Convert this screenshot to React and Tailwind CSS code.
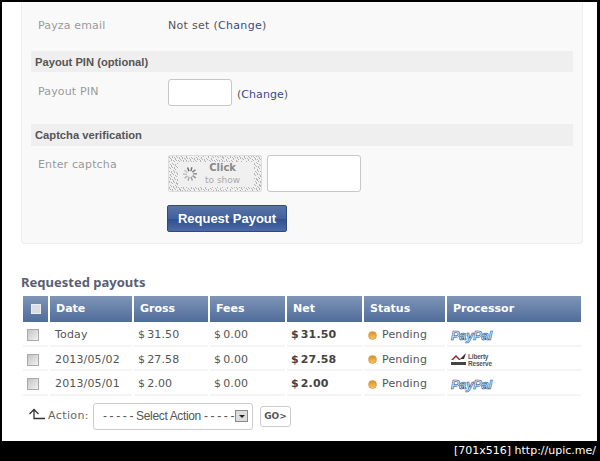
import React from 'react';

const COLS = 'grid grid-cols-[25px_82px_74px_75px_75px_81px_134px] gap-x-[2px]';
const CELL = 'border-b-2 border-[#f4f4f4] flex items-center pt-[4px]';

const ROWS = [
  { date: 'Today', gross: '31.50', net: '31.50', proc: 'paypal' },
  { date: '2013/05/02', gross: '27.58', net: '27.58', proc: 'liberty' },
  { date: '2013/05/01', gross: '2.00', net: '2.00', proc: 'paypal' },
];

// fixed speckle for the captcha frame
const SPECKS = Array.from({ length: 900 }, (_, i) => {
  const x = (i * 37) % 94;
  const y = (i * 23 + (i % 7) * 5) % 37;
  return { x, y, edge: x < 9 || x > 84 || y < 6 || y > 30 };
}).filter((s) => s.edge);

const Spinner = () => (
  <svg width="18" height="18" viewBox="0 0 18 18" className="shrink-0">
    {Array.from({ length: 10 }, (_, i) => (
      <line key={i} x1="9" y1="2" x2="9" y2="6" stroke="#666" strokeOpacity={1 - i * 0.08} strokeWidth="1.4" transform={`rotate(${i * 36 - 20} 9 9)`} />
    ))}
  </svg>
);

const PayPal = () => (
  <span className="font-['Liberation_Sans',sans-serif] italic font-bold text-[13px] leading-none tracking-[-0.3px] text-[#dfe9f7] [-webkit-text-stroke:0.6px_#24508f]">
    PayPal
  </span>
);

const Liberty = () => (
  <div className="flex items-center gap-[1px]">
    <svg width="16" height="13" viewBox="0 0 16 13">
      <path d="M0 7 L5 2 L10 7 L8 7 L5 4 L2 7 Z" fill="#8a2b22" />
      <path d="M9 6 L15 0 L13 6 Z" fill="#333" />
      <rect x="0" y="9" width="15" height="3" fill="#444" />
    </svg>
    <div className="font-['Liberation_Sans',sans-serif] font-bold text-[6.5px] leading-[7px] tracking-[-0.2px] text-[#555]">
      <div>Liberty</div>
      <div>Reserve</div>
    </div>
  </div>
);

const Check = () => (
  <div className="w-[12px] h-[12px] border border-[#aaa] bg-[linear-gradient(135deg,#c4c4c4,#f2f2f2)]" />
);

const Input = ({ className }) => (
  <div className={`bg-white border border-[#c8c8c8] rounded-[3px] ${className}`} />
);

const Money = ({ value }) => (
  <span><span className="mr-[2px]">$</span>{value}</span>
);

export default function App() {
  return (
    <div className="w-[600px] h-[461px] bg-black flex flex-col overflow-hidden font-['DejaVu_Sans',sans-serif] text-[11px] tracking-[0.15px] text-[#555]">
      <div className="h-[439px] mt-[2px] ml-[2px] mr-[3px] bg-white pl-[19px] shrink-0">
        {/* Form panel */}
        <div className="w-[562px] h-[242px] bg-[#f9f9f9] border border-t-0 border-[#efefef] rounded-b-[4px] px-[9px]">
          <div className="flex items-center h-[49px] pl-[7px]">
            <div className="w-[130px] text-[#999]">Payza email</div>
            <div className="tracking-[0.3px]">Not set (<span className="text-[#3a4a8c]">Change</span>)</div>
          </div>
          <div className="h-[21px] bg-[#efefef] flex items-center pl-[4px] pt-[1px] font-['Liberation_Sans',sans-serif] font-bold text-[11.2px] tracking-normal text-[#555]">
            Payout PIN (optional)
          </div>
          <div className="flex items-start h-[52px] pt-[7px] pl-[7px]">
            <div className="w-[130px] text-[#999] pt-[5px]">Payout PIN</div>
            <Input className="w-[64px] h-[27px]" />
            <div className="ml-[5px] pt-[8px] tracking-[0.05px]">(<span className="text-[#3a4a8c]">Change</span>)</div>
          </div>
          <div className="h-[22px] bg-[#efefef] flex items-center pl-[4px] font-['Liberation_Sans',sans-serif] font-bold text-[11.2px] tracking-normal text-[#555]">
            Captcha verification
          </div>
          <div className="flex items-start pt-[9px] pl-[7px]">
            <div className="w-[130px] text-[#999] pt-[2px]">Enter captcha</div>
            <div>
              <div className="flex gap-[5px]">
                <div className="relative w-[94px] h-[37px] bg-[#f0f0f0] border border-[#ddd] rounded-[2px] flex items-center pl-[12px] gap-[6px] overflow-hidden">
                  <svg width="94" height="37" className="absolute left-0 top-0">
                    {SPECKS.map((s, i) => (
                      <rect key={i} x={s.x} y={s.y} width="1" height="1" fill="#b5b5b5" />
                    ))}
                  </svg>
                  <Spinner />
                  <div className="relative text-center text-[#888] leading-[12px] tracking-normal">
                    <div className="font-bold text-[10px]">Click</div>
                    <div className="text-[9px] text-[#aaa]">to show</div>
                  </div>
                </div>
                <Input className="w-[94px] h-[37px]" />
              </div>
              <div className="mt-[13px] -ml-[1px] w-[120px] h-[27px] rounded-[2px] border border-[#2f4a80] bg-[linear-gradient(#5a74a6,#41609c_50%,#2f4f8e_52%,#4d6aa6)] flex items-center justify-center font-['Liberation_Sans',sans-serif] font-bold text-[13px] tracking-normal text-white">
                Request Payout
              </div>
            </div>
          </div>
        </div>

        {/* Requested payouts */}
        <div className="mt-[30px] font-['Noto_Sans',sans-serif] font-bold text-[13px] leading-[16px] tracking-normal text-[#5a6072]">Requested payouts</div>
        <div className="ml-[2px] mt-[6px] w-[558px]">
          <div className={`${COLS} h-[26px] text-white font-bold text-[11px] tracking-normal`}>
            <div className="bg-[linear-gradient(#7f95b7,#4f6c9a)] flex items-center justify-center">
              <div className="w-[10px] h-[10px] bg-[#d8dde6] border border-[#eee]" />
            </div>
            {['Date', 'Gross', 'Fees', 'Net', 'Status', 'Processor'].map((h) => (
              <div key={h} className="bg-[linear-gradient(#7f95b7,#4f6c9a)] flex items-center pl-[6px]">{h}</div>
            ))}
          </div>
          {ROWS.map((r) => (
            <div key={r.date} className={`${COLS} h-[24.6px] items-stretch`}>
              <div className={`${CELL} pl-[4px]`}><Check /></div>
              <div className={`${CELL} pl-[5px]`}>{r.date}</div>
              <div className={`${CELL} pl-[4px]`}><Money value={r.gross} /></div>
              <div className={`${CELL} pl-[4px]`}><Money value="0.00" /></div>
              <div className={`${CELL} pl-[4px] font-bold text-[#444]`}><Money value={r.net} /></div>
              <div className={`${CELL} pl-[4px] gap-[5px]`}>
                <span className="w-[9px] h-[9px] rounded-full bg-[linear-gradient(#d9902a,#f6c46a)] border border-[#e0a040]" />
                Pending
              </div>
              <div className={`${CELL} pl-[4px]`}>
                {r.proc === 'paypal' ? <PayPal /> : <Liberty />}
              </div>
            </div>
          ))}
          <div className="flex items-center mt-[7px] pl-[5px]">
            <svg width="17" height="13" viewBox="0 0 17 13" className="shrink-0 -mt-[3px]">
              <path d="M6 11 V2 M1.5 6 L6 1.5 L10.5 6 M5.5 10.5 H17" fill="none" stroke="#333" strokeWidth="1.3" />
            </svg>
            <span className="ml-[3px] text-[#666] tracking-[0.4px]">Action:</span>
            <div className="ml-[4px] w-[160px] h-[27px] bg-white border border-[#ccc] rounded-[3px] flex items-center pl-[9px] font-['Liberation_Sans',sans-serif] text-[12px] tracking-[-0.35px] text-[#555] whitespace-nowrap">
              - - - - - Select Action - - - - -
              <span className="ml-[1px] w-[13px] h-[12px] border border-[#888] bg-[#ddd] flex items-center justify-center shrink-0">
                <span className="border-x-[3px] border-x-transparent border-t-[3px] border-t-[#222]" />
              </span>
            </div>
            <div className="ml-[7px] w-[31px] h-[21px] bg-white border border-[#ccc] rounded-[3px] flex items-center justify-center text-[9px] font-bold tracking-normal text-[#555]">
              GO&gt;
            </div>
          </div>
        </div>
      </div>
      <div className="flex-1 flex items-center justify-end pr-[4px] text-[11px] tracking-normal text-white whitespace-nowrap">
        [701x516] http://upic.me/
      </div>
    </div>
  );
}
